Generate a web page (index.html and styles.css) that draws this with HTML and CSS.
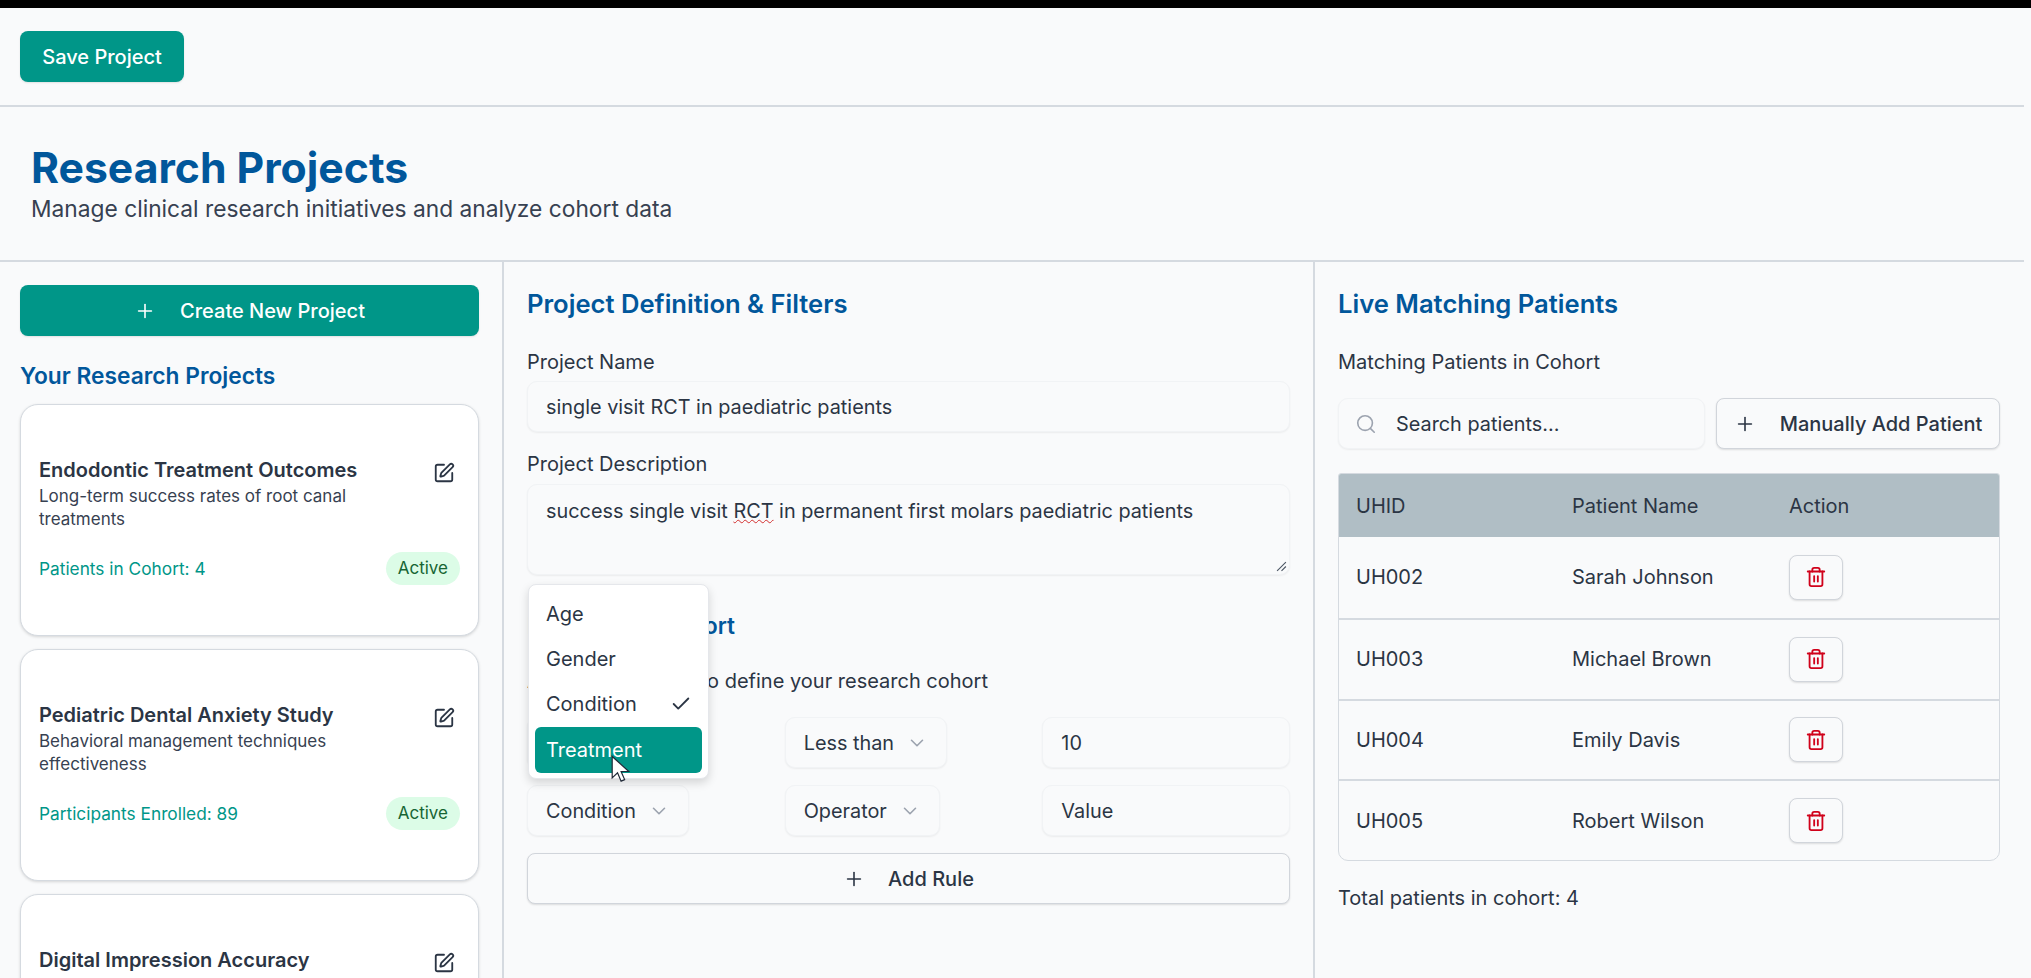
FILE: index.html
```html
<!DOCTYPE html>
<html lang="en">
<head>
    <meta charset="UTF-8">
    <title>Research Projects</title>
    <link rel="stylesheet" href="styles.css">
</head>
<body>

<svg class="sprite" width="0" height="0">
    <symbol id="i-plus" viewBox="0 0 24 24"><path d="M5 12h14"/><path d="M12 5v14"/></symbol>
    <symbol id="i-edit" viewBox="0 0 24 24"><path d="M12 3H5a2 2 0 0 0-2 2v14a2 2 0 0 0 2 2h14a2 2 0 0 0 2-2v-7"/><path d="M18.375 2.625a1 1 0 0 1 3 3l-9.013 9.014a2 2 0 0 1-.853.505l-2.873.84a.5.5 0 0 1-.62-.62l.84-2.873a2 2 0 0 1 .506-.852z"/></symbol>
    <symbol id="i-chevron" viewBox="0 0 24 24"><path d="m6 9 6 6 6-6"/></symbol>
    <symbol id="i-check" viewBox="0 0 24 24"><path d="M20 6 9 17l-5-5"/></symbol>
    <symbol id="i-search" viewBox="0 0 24 24"><circle cx="11" cy="11" r="8"/><path d="m21 21-4.3-4.3"/></symbol>
    <symbol id="i-trash" viewBox="0 0 24 24"><path d="M3 6h18"/><path d="M19 6v14c0 1-1 2-2 2H7c-1 0-2-1-2-2V6"/><path d="M8 6V4c0-1 1-2 2-2h4c1 0 2 1 2 2v2"/><path d="M10 11v6"/><path d="M14 11v6"/></symbol>
</svg>

<div class="screen-edge"></div>

<div class="page">
    <div class="toolbar">
        <button class="btn-primary save-btn">Save Project</button>
    </div>

    <header class="page-header">
        <h1>Research Projects</h1>
        <p>Manage clinical research initiatives and analyze cohort data</p>
    </header>

    <main class="columns">
        <aside class="col-projects">
            <button class="btn-primary create-btn"><svg class="icon"><use href="#i-plus"/></svg>Create New Project</button>
            <h3 class="list-title">Your Research Projects</h3>

            <div class="project-card">
                <div class="card-top">
                    <div>
                        <h4>Endodontic Treatment Outcomes</h4>
                        <p>Long-term success rates of root canal treatments</p>
                    </div>
                    <svg class="icon edit-icon"><use href="#i-edit"/></svg>
                </div>
                <div class="card-meta">
                    <span class="count">Patients in Cohort: 4</span>
                    <span class="badge">Active</span>
                </div>
            </div>

            <div class="project-card">
                <div class="card-top">
                    <div>
                        <h4>Pediatric Dental Anxiety Study</h4>
                        <p>Behavioral management techniques effectiveness</p>
                    </div>
                    <svg class="icon edit-icon"><use href="#i-edit"/></svg>
                </div>
                <div class="card-meta">
                    <span class="count">Participants Enrolled: 89</span>
                    <span class="badge">Active</span>
                </div>
            </div>

            <div class="project-card">
                <div class="card-top">
                    <div>
                        <h4>Digital Impression Accuracy</h4>
                    </div>
                    <svg class="icon edit-icon"><use href="#i-edit"/></svg>
                </div>
            </div>
        </aside>

        <section class="col-definition">
            <h2 class="panel-title">Project Definition &amp; Filters</h2>

            <label class="field-label">Project Name</label>
            <div class="field">single visit RCT in paediatric patients</div>

            <label class="field-label desc-label">Project Description</label>
            <div class="field field-area">
                success single visit <span class="misspelt">RCT</span> in permanent first molars paediatric patients
                <svg class="resize-grip" viewBox="0 0 10 10"><path d="M9 1 1 9"/><path d="M9 5 5 9"/></svg>
            </div>

            <h3 class="cohort-title">Define Your Cohort</h3>
            <p class="cohort-hint">Add filtering rules to define your research cohort</p>

            <div class="rule-grid">
                <div class="field select-field">Condition<svg class="icon chevron"><use href="#i-chevron"/></svg></div>
                <div class="field select-field">Less than<svg class="icon chevron"><use href="#i-chevron"/></svg></div>
                <div class="field">10</div>
                <div class="field select-field">Condition<svg class="icon chevron"><use href="#i-chevron"/></svg></div>
                <div class="field select-field">Operator<svg class="icon chevron"><use href="#i-chevron"/></svg></div>
                <div class="field">Value</div>
            </div>

            <button class="btn-outline add-rule"><svg class="icon"><use href="#i-plus"/></svg>Add Rule</button>

            <div class="dropdown">
                <div class="dropdown-item">Age</div>
                <div class="dropdown-item">Gender</div>
                <div class="dropdown-item">Condition<svg class="icon check"><use href="#i-check"/></svg></div>
                <div class="dropdown-item active">Treatment</div>
            </div>
            <svg class="cursor" viewBox="0 0 16 24"><path d="M1 1v18l4.5-4.2 3 7 3-1.3-3-6.8H15z"/></svg>
        </section>

        <section class="col-patients">
            <h2 class="panel-title">Live Matching Patients</h2>
            <label class="field-label">Matching Patients in Cohort</label>

            <div class="search-row">
                <div class="field search-box"><svg class="icon search-icon"><use href="#i-search"/></svg>Search patients...</div>
                <button class="btn-outline add-patient"><svg class="icon"><use href="#i-plus"/></svg>Manually Add Patient</button>
            </div>

            <div class="patient-table">
                <div class="table-row table-head">
                    <span>UHID</span><span>Patient Name</span><span>Action</span>
                </div>
                <div class="table-row">
                    <span>UH002</span><span>Sarah Johnson</span>
                    <button class="btn-delete"><svg class="icon"><use href="#i-trash"/></svg></button>
                </div>
                <div class="table-row">
                    <span>UH003</span><span>Michael Brown</span>
                    <button class="btn-delete"><svg class="icon"><use href="#i-trash"/></svg></button>
                </div>
                <div class="table-row">
                    <span>UH004</span><span>Emily Davis</span>
                    <button class="btn-delete"><svg class="icon"><use href="#i-trash"/></svg></button>
                </div>
                <div class="table-row">
                    <span>UH005</span><span>Robert Wilson</span>
                    <button class="btn-delete"><svg class="icon"><use href="#i-trash"/></svg></button>
                </div>
            </div>

            <p class="total">Total patients in cohort: 4</p>
        </section>
    </main>
</div>

</body>
</html>
```

FILE: styles.css
```css
* {
    box-sizing: border-box;
}

html, body {
    height: 100%;
}

body {
    margin: 0;
    overflow: hidden;
    font-family: 'Inter', sans-serif;
    font-size: 20px;
    color: #2b3544;
    background-color: #f9fafb;
}

.sprite {
    position: absolute;
}

.icon {
    width: 22px;
    height: 22px;
    fill: none;
    stroke: currentColor;
    stroke-width: 1.75;
    stroke-linecap: round;
    stroke-linejoin: round;
    flex: none;
}

.screen-edge {
    height: 8px;
    background-color: #000;
}

.page {
    width: 2024px;
}

.toolbar {
    height: 99px;
    padding: 23px 20px 0;
    border-bottom: 2px solid #d5dae0;
}

button {
    font-family: inherit;
    font-size: 20px;
    cursor: pointer;
}

.btn-primary {
    display: flex;
    align-items: center;
    justify-content: center;
    height: 51px;
    border: none;
    border-radius: 8px;
    color: #fff;
    font-weight: 500;
    background-color: #009688;
    box-shadow: 0 1px 2px rgba(0, 0, 0, 0.1);
}

.save-btn {
    width: 164px;
}

.page-header {
    height: 155px;
    padding: 35px 31px 0;
    border-bottom: 2px solid #d5dae0;
}

.page-header h1 {
    margin: 0;
    font-size: 42.7px;
    line-height: 51px;
    font-weight: 700;
    color: #01579b;
}

.page-header p {
    margin: 0;
    font-size: 22.75px;
    line-height: 32px;
    color: #374151;
}

.columns {
    display: flex;
    height: 716px;
}

.col-projects {
    width: 504px;
    flex: none;
    padding: 23px 23px 0 20px;
    border-right: 2px solid #d5dae0;
    overflow: hidden;
}

.create-btn {
    width: 100%;
}

.create-btn .icon {
    margin-right: 24px;
}

.list-title {
    margin: 25px 0 13px;
    font-size: 22.75px;
    line-height: 30px;
    font-weight: 600;
    color: #01579b;
}

.project-card {
    height: 232px;
    margin-bottom: 13px;
    padding: 52px 18px 0;
    border: 1px solid #d5dae0;
    border-radius: 18px;
    background-color: #fff;
    box-shadow: 0 1px 3px rgba(0, 0, 0, 0.15);
}

.card-top {
    display: flex;
    justify-content: space-between;
    align-items: flex-start;
    gap: 24px;
}

.project-card h4 {
    margin: 0 0 2px;
    font-size: 20px;
    line-height: 26px;
    font-weight: 600;
}

.project-card p {
    margin: 0;
    font-size: 17px;
    line-height: 23px;
    color: #374151;
}

.edit-icon {
    margin: 5px 5px 0 0;
    stroke-width: 2;
}

.card-meta {
    display: flex;
    justify-content: space-between;
    align-items: center;
    margin-top: 21px;
}

.count {
    font-size: 17.3px;
    color: #009688;
}

.badge {
    padding: 5px 12px;
    border-radius: 17px;
    font-size: 17px;
    line-height: 23px;
    color: #166534;
    background-color: #dcfce7;
}

.col-definition {
    position: relative;
    width: 811px;
    flex: none;
    padding: 23px 23px 0;
    border-right: 2px solid #d5dae0;
}

.col-patients {
    flex: 1;
    padding: 23px 24px 0 23px;
}

.panel-title {
    margin: 0 0 26px;
    font-size: 25.6px;
    line-height: 38px;
    font-weight: 600;
    color: #01579b;
}

.field-label {
    display: block;
    margin-bottom: 6px;
    line-height: 26px;
}

.desc-label {
    margin-top: 19px;
    margin-bottom: 7px;
}

.field {
    display: flex;
    align-items: center;
    height: 51px;
    padding: 0 18px;
    border: 1px solid #f1f3f5;
    border-radius: 10px;
    font-size: 19.85px;
    background-color: #f9fafb;
    box-shadow: 0 1px 2px rgba(0, 0, 0, 0.06);
}

.field-area {
    position: relative;
    display: block;
    height: 91px;
    padding-top: 12px;
    line-height: 28px;
}

.misspelt {
    text-decoration: underline wavy #d32f2f 1px;
}

.resize-grip {
    position: absolute;
    right: 2px;
    bottom: 2px;
    width: 11px;
    height: 11px;
    fill: none;
    stroke: #4b5563;
    stroke-width: 1;
}

.cohort-title {
    margin: 36px 0 0;
    font-size: 22.5px;
    line-height: 30px;
    font-weight: 600;
    color: #01579b;
}

.cohort-hint {
    margin: 27px 0 0;
    line-height: 26px;
}

.rule-grid {
    display: grid;
    grid-template-columns: repeat(3, 1fr);
    gap: 17px 10px;
    margin-top: 23px;
    justify-items: start;
}

.rule-grid .field:not(.select-field) {
    width: 100%;
}

.select-field {
    gap: 12px;
}

.chevron {
    color: #9ca3af;
}

.btn-outline {
    display: flex;
    align-items: center;
    justify-content: center;
    height: 51px;
    border: 1px solid #d1d5db;
    border-radius: 8px;
    color: #2b3544;
    font-weight: 500;
    background-color: #f9fafb;
    box-shadow: 0 1px 2px rgba(0, 0, 0, 0.12);
}

.btn-outline .icon {
    margin-right: 23px;
}

.add-rule {
    width: 100%;
    margin-top: 17px;
}

.dropdown {
    position: absolute;
    left: 24px;
    top: 322px;
    width: 181px;
    height: 195px;
    padding: 6px 6px 0;
    border: 1px solid #e5e7eb;
    border-radius: 8px;
    background-color: #fff;
    box-shadow: 0 4px 10px rgba(0, 0, 0, 0.15);
}

.dropdown-item {
    display: flex;
    align-items: center;
    justify-content: space-between;
    height: 45.4px;
    padding: 0 16px 0 11px;
    border-radius: 6px;
}

.dropdown-item.active {
    color: #fff;
    background-color: #009688;
}

.check {
    margin-right: -6px;
    stroke-width: 2;
}

.cursor {
    position: absolute;
    left: 107px;
    top: 493px;
    width: 19px;
    height: 29px;
    fill: #fff;
    stroke: #1f2937;
    stroke-width: 1;
}

.search-row {
    display: flex;
    gap: 11px;
    margin-top: 23px;
}

.search-box {
    width: 367px;
    padding-left: 16px;
}

.search-icon {
    margin-right: 19px;
    color: #9ca3af;
}

.add-patient {
    width: 284px;
}

.add-patient .icon {
    margin-right: 24px;
}

.patient-table {
    width: 662px;
    margin-top: 24px;
    border: 1px solid #d5dae0;
    border-radius: 3px 3px 10px 10px;
    overflow: hidden;
}

.table-row {
    display: grid;
    grid-template-columns: 216px 217px 1fr;
    align-items: center;
    height: 80.75px;
    padding-left: 17px;
    border-top: 2px solid #d5dae0;
}

.table-head {
    height: 63px;
    border-top: none;
    background-color: #b0bec5;
}

.table-head + .table-row {
    border-top: none;
}

.btn-delete {
    display: flex;
    align-items: center;
    justify-content: center;
    width: 54px;
    height: 45px;
    padding: 0;
    border: 1px solid #d1d5db;
    border-radius: 8px;
    color: #d0021b;
    background-color: #f9fafb;
    box-shadow: 0 1px 2px rgba(0, 0, 0, 0.12);
}

.btn-delete .icon {
    stroke-width: 2;
}

.total {
    margin: 24px 0 0;
    line-height: 26px;
}
```
